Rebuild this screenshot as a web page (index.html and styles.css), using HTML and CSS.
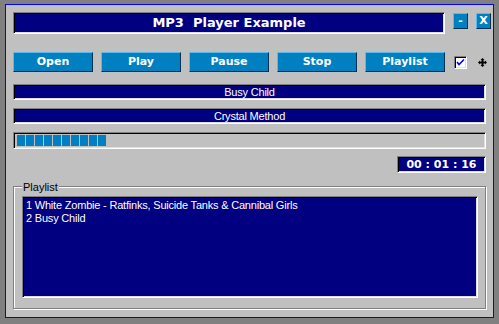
FILE: index.html
```html
<!DOCTYPE html>
<html>
<head>
<meta charset="utf-8">
<link rel="stylesheet" href="styles.css">
</head>
<body>
<div class="window">
  <div class="titlerow">
    <div class="titlebar">MP3&nbsp; Player Example</div>
    <div class="sysbtn">-</div>
    <div class="sysbtn">X</div>
  </div>
  <div class="btnrow">
    <div class="btn">Open</div>
    <div class="btn">Play</div>
    <div class="btn">Pause</div>
    <div class="btn">Stop</div>
    <div class="btn">Playlist</div>
    <div class="check">
      <svg width="9" height="9" viewBox="0 0 9 9"><path d="M1 4 L3 6.5 L8 1.5" fill="none" stroke="#0000ff" stroke-width="1.6"/></svg>
    </div>
    <div class="move">
      <svg width="9" height="9" viewBox="0 0 9 9"><path d="M4.5 0 L6.5 2 L5.5 2 L5.5 3.5 L7 3.5 L7 2.5 L9 4.5 L7 6.5 L7 5.5 L5.5 5.5 L5.5 7 L6.5 7 L4.5 9 L2.5 7 L3.5 7 L3.5 5.5 L2 5.5 L2 6.5 L0 4.5 L2 2.5 L2 3.5 L3.5 3.5 L3.5 2 L2.5 2 Z" fill="#000"/></svg>
    </div>
  </div>
  <div class="lcd">Busy Child</div>
  <div class="lcd lcd2">Crystal Method</div>
  <div class="progress">
    <span class="blk"></span><span class="blk"></span><span class="blk"></span><span class="blk"></span><span class="blk"></span><span class="blk"></span><span class="blk"></span><span class="blk"></span><span class="blk"></span><span class="blk"></span>
  </div>
  <div class="timerow"><div class="time">00 : 01 : 16</div></div>
  <div class="group">
    <span class="legend">Playlist</span>
    <div class="list">
      <div>1 White Zombie - Ratfinks, Suicide Tanks &amp; Cannibal Girls</div>
      <div>2 Busy Child</div>
    </div>
  </div>
</div>
</body>
</html>
```

FILE: styles.css
```css
* { box-sizing: border-box; }
html, body { margin: 0; padding: 0; }
body {
  background: #808080;
  width: 499px;
  height: 324px;
  overflow: hidden;
  font-family: "Liberation Sans", Arial, sans-serif;
  font-size: 11px;
}
.window {
  margin: 4px 0 0 5px;
  width: 489px;
  height: 314px;
  border: 1px solid #0000ff;
  background: #c0c0c0;
  padding: 7px 2px 8px 7px;
  display: flex;
  flex-direction: column;
}
.sunken {
}
.titlerow {
  display: flex;
  align-items: flex-start;
  gap: 8px;
  height: 22px;
}
.titlebar {
  width: 433px;
  height: 22px;
  background: #000080;
  border: 1px solid;
  border-color: #808080 #ffffff #ffffff #808080;
  box-shadow: inset 1px 1px #000000, inset -1px -1px #dfdfdf;
  color: #ffffff;
  font-family: "DejaVu Sans", Verdana, sans-serif;
  font-weight: bold;
  font-size: 13px;
  line-height: 20px;
  text-align: center;
}
.sysbtn {
  margin-top: 1px;
  width: 15px;
  height: 16px;
  background: #0080c0;
  border: 1px solid;
  border-color: #60b8e8 #003050 #003050 #60b8e8;
  color: #ffffff;
  font-family: "DejaVu Sans", Verdana, sans-serif;
  font-weight: bold;
  font-size: 11px;
  line-height: 14px;
  text-align: center;
}
.btnrow {
  margin-top: 18px;
  display: flex;
  align-items: center;
  gap: 8px;
  height: 20px;
}
.btn {
  width: 80px;
  height: 20px;
  background: #0080c0;
  border: 1px solid;
  border-color: #60b8e8 #003050 #003050 #60b8e8;
  color: #ffffff;
  font-family: "DejaVu Sans", Verdana, sans-serif;
  font-weight: bold;
  font-size: 11px;
  line-height: 18px;
  text-align: center;
}
.check {
  margin-left: 1px;
  width: 13px;
  height: 13px;
  background: #ffffff;
  border: 1px solid;
  border-color: #808080 #ffffff #ffffff #808080;
  box-shadow: inset 1px 1px #000000, inset -1px -1px #dfdfdf;
  display: flex;
  align-items: center;
  justify-content: center;
}
.check svg { display: block; }
.move {
  margin-left: 3px;
  width: 9px;
  height: 9px;
  margin-top: 1px;
}
.move svg { display: block; }
.lcd {
  margin-top: 12px;
  width: 473px;
  height: 16px;
  background: #000080;
  border: 1px solid;
  border-color: #808080 #ffffff #ffffff #808080;
  box-shadow: inset 1px 1px #000000, inset -1px -1px #dfdfdf;
  color: #ffffff;
  text-align: center;
  line-height: 14px;
  letter-spacing: -0.2px;
}
.lcd2 { margin-top: 8px; }
.progress {
  margin-top: 8px;
  width: 473px;
  height: 17px;
  border: 1px solid;
  border-color: #808080 #ffffff #ffffff #808080;
  box-shadow: inset 1px 1px #000000, inset -1px -1px #dfdfdf;
  padding: 2px 0 0 3px;
  display: flex;
  gap: 1px;
}
.blk {
  width: 8px;
  height: 11px;
  background: #0080c0;
}
.timerow {
  margin-top: 7px;
  width: 473px;
  display: flex;
  justify-content: flex-end;
}
.time {
  width: 89px;
  height: 17px;
  background: #000080;
  border: 1px solid;
  border-color: #808080 #ffffff #ffffff #808080;
  box-shadow: inset 1px 1px #000000, inset -1px -1px #dfdfdf;
  color: #ffffff;
  font-family: "DejaVu Sans", Verdana, sans-serif;
  font-weight: bold;
  font-size: 11px;
  line-height: 15px;
  text-align: center;
}
.group {
  position: relative;
  margin-top: 13px;
  width: 473px;
  height: 123px;
  border: 1px solid #808080;
  box-shadow: inset 1px 1px #ffffff, 1px 1px #ffffff;
  padding: 9px 8px 10px 8px;
}
.legend {
  position: absolute;
  left: 8px;
  top: -6px;
  padding: 0 1px;
  background: #c0c0c0;
  color: #000000;
  line-height: 12px;
}
.list {
  width: 456px;
  height: 102px;
  background: #000080;
  border: 1px solid;
  border-color: #808080 #ffffff #ffffff #808080;
  box-shadow: inset 1px 1px #000000, inset -1px -1px #dfdfdf;
  color: #ffffff;
  padding: 2px 3px;
  line-height: 13px;
  letter-spacing: -0.2px;
}
```
